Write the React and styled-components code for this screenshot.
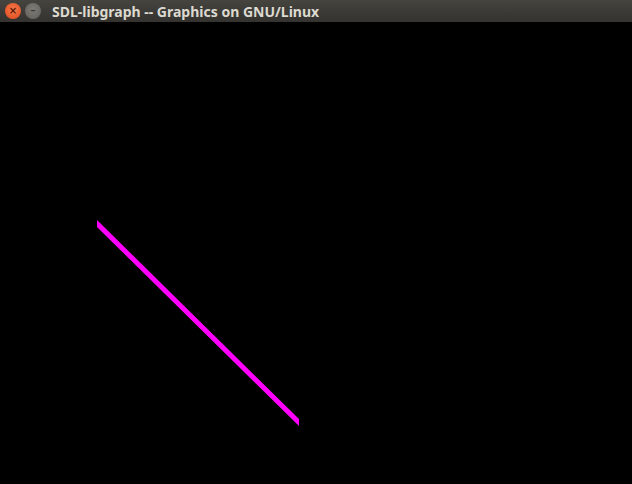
import styled, { createGlobalStyle } from 'styled-components'

const Global = createGlobalStyle`
  html, body { margin: 0; padding: 0; background: #000; }
  #root { width: 632px; height: 484px; }
`

const Window = styled.div`
  width: 632px;
  height: 484px;
  display: flex;
  flex-direction: column;
  background: #000;
  overflow: hidden;
`

const TitleBar = styled.div`
  height: 22px;
  flex: 0 0 22px;
  display: flex;
  align-items: center;
  padding-left: 5px;
  gap: 4px;
  background: linear-gradient(#45443f, #3a3935 60%, #34332f);
  box-sizing: border-box;
`

const WinButton = styled.div`
  width: 16px;
  height: 16px;
  border-radius: 50%;
  background: ${p => (p.$close ? 'radial-gradient(circle at 50% 40%, #f57b4a, #e0461c)' : 'radial-gradient(circle at 50% 40%, #7d7c77, #5f5e5a)')};
  display: flex;
  align-items: center;
  justify-content: center;
  color: ${p => (p.$close ? '#5a1a08' : '#3a3935')};
  font-family: "DejaVu Sans", sans-serif;
  font-size: 10px;
  font-weight: bold;
  line-height: 1;
`

const Title = styled.span`
  margin-left: 7px;
  color: #dcd9d0;
  font-family: "Noto Sans", "DejaVu Sans", sans-serif;
  font-weight: bold;
  font-size: 14px;
  white-space: nowrap;
`

const Canvas = styled.div`
  flex: 1;
  background: #000;
`

export default function App() {
  return (
    <Window>
      <Global />
      <TitleBar>
        <WinButton $close>×</WinButton>
        <WinButton>–</WinButton>
        <Title>SDL-libgraph -- Graphics on GNU/Linux</Title>
      </TitleBar>
      <Canvas>
        <svg width="632" height="462" viewBox="0 22 632 462">
          <polygon points="97,220 299,419 299,426 97,227" fill="#ff00ff" />
        </svg>
      </Canvas>
    </Window>
  )
}
